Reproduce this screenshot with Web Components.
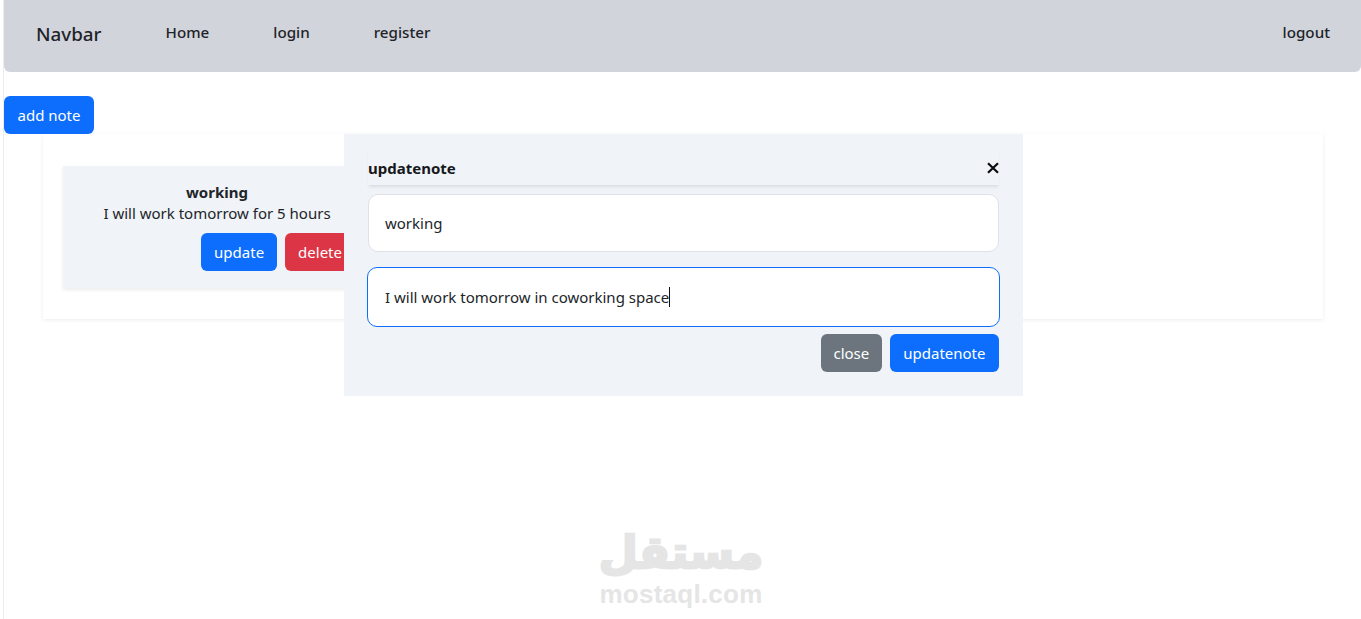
<!DOCTYPE html>
<html>
<head>
<meta charset="utf-8">
<title>notes</title>
<style>
  html, body { margin: 0; height: 100%; background: #fff; }
  body {
    font-family: "Noto Sans", "Open Sans", sans-serif;
    font-size: 15px;
    color: #212529;
    height: 619px;
    overflow: hidden;
    position: relative;
  }
  #page { margin-left: 3px; border-left: 1px solid #ececec; height: 619px; }
</style>
</head>
<body>
<div id="page">
  <nav-bar brand="Navbar">
    <nav-link>Home</nav-link>
    <nav-link>login</nav-link>
    <nav-link>register</nav-link>
    <nav-link slot="end">logout</nav-link>
  </nav-bar>
  <action-button variant="primary" style="margin-top:24px;padding:0 13.5px">add note</action-button>
  <notes-panel>
    <note-card title="working">I will work tomorrow for 5 hours</note-card>
  </notes-panel>
</div>
<update-modal heading="updatenote">
  <text-field>working</text-field>
  <text-field focused>I will work tomorrow in coworking space</text-field>
  <action-button variant="secondary" slot="actions" style="padding:0 12.5px">close</action-button>
  <action-button variant="primary" slot="actions" style="padding:0 13.5px">updatenote</action-button>
</update-modal>
<site-mark></site-mark>

<script>
class NavBar extends HTMLElement {
  constructor() {
    super()
    this.attachShadow({mode: 'open'})
    this.shadowRoot.innerHTML = `
      <style>
        :host {
          display: flex;
          align-items: center;
          height: 72px;
          box-sizing: border-box;
          padding: 0 31px 9px 32px;
          background: #d1d5db;
          border-radius: 0 0 6px 6px;
        }
        b { font-size: 18.8px; font-weight: 500; margin-right: 64px; position: relative; top: 2px; color: #1f2329; }
        .links { display: flex; gap: 64px; flex: 1; }
      </style>
      <b>${this.getAttribute('brand')}</b>
      <div class="links"><slot></slot></div>
      <slot name="end"></slot>
    `
  }
}

class NavLink extends HTMLElement {
  constructor() {
    super()
    this.attachShadow({mode: 'open'})
    this.shadowRoot.innerHTML = `
      <style>
        :host { display: block; font-size: 15.2px; font-weight: 500; color: #1f2329; }
      </style>
      <slot></slot>
    `
  }
}

class ActionButton extends HTMLElement {
  constructor() {
    super()
    this.attachShadow({mode: 'open'})
    this.shadowRoot.innerHTML = `
      <style>
        :host {
          display: inline-flex;
          align-items: center;
          justify-content: center;
          height: 38px;
          box-sizing: border-box;
          padding: 0 13px;
          border-radius: 6px;
          color: #fff;
          font-size: 15px;
          vertical-align: top;
          background: #0d6efd;
        }
        :host([variant=secondary]) { background: #6c757d; }
        :host([variant=danger]) { background: #dc3545; }
      </style>
      <slot></slot>
    `
  }
}

class NotesPanel extends HTMLElement {
  constructor() {
    super()
    this.attachShadow({mode: 'open'})
    this.shadowRoot.innerHTML = `
      <style>
        :host {
          display: block;
          box-sizing: border-box;
          margin-left: 39px;
          width: 1280px;
          height: 185px;
          padding: 32px 20px;
          background: #fff;
          box-shadow: 0 1px 4px rgba(0, 0, 0, .08);
        }
      </style>
      <slot></slot>
    `
  }
}

class NoteCard extends HTMLElement {
  constructor() {
    super()
    this.attachShadow({mode: 'open'})
    this.shadowRoot.innerHTML = `
      <style>
        :host {
          display: block;
          box-sizing: border-box;
          width: 308px;
          height: 122px;
          padding: 16px 16px 0;
          background: #f0f3f8;
          box-shadow: 0 2px 4px rgba(0, 0, 0, .08);
          text-align: center;
          line-height: 21px;
        }
        h5 { margin: 0; font-size: 15px; font-weight: 700; }
        p { margin: 0; }
        .row { display: flex; justify-content: flex-end; gap: 8px; margin-top: 9px; }
      </style>
      <h5>${this.getAttribute('title')}</h5>
      <p><slot></slot></p>
      <div class="row">
        <action-button variant="primary">update</action-button>
        <action-button variant="danger">delete</action-button>
      </div>
    `
  }
}

class TextField extends HTMLElement {
  constructor() {
    super()
    this.attachShadow({mode: 'open'})
    this.shadowRoot.innerHTML = `
      <style>
        :host {
          display: flex;
          align-items: center;
          box-sizing: border-box;
          height: 58px;
          padding: 0 16px;
          background: #fff;
          border: 1px solid #dee2e6;
          border-radius: 10px;
          font-size: 15px;
        }
        :host([focused]) { height: 60px; border-color: #0d6efd; margin: 0 -1px; padding: 0 17px; }
        i { display: none; width: 1px; height: 20px; background: #111; }
        :host([focused]) i { display: block; }
      </style>
      <slot></slot><i></i>
    `
  }
}

class UpdateModal extends HTMLElement {
  constructor() {
    super()
    this.attachShadow({mode: 'open'})
    this.shadowRoot.innerHTML = `
      <style>
        :host {
          position: absolute;
          left: 344px;
          top: 134px;
          width: 679px;
          height: 262px;
          box-sizing: border-box;
          padding: 16px 24px;
          background: #f0f3f8;
          display: flex;
          flex-direction: column;
        }
        header {
          display: flex;
          justify-content: space-between;
          align-items: center;
          height: 35px;
          box-shadow: 0 3px 3px -1px rgba(0, 0, 0, .09);
          font-weight: 700;
          color: #16181b;
        }
        svg { display: block; margin-top: 1px; }
        .fields { display: flex; flex-direction: column; gap: 15px; margin-top: 9px; }
        .actions { display: flex; justify-content: flex-end; gap: 8px; margin-top: 7px; }
      </style>
      <header>
        <span>${this.getAttribute('heading')}</span>
        <svg width="12" height="12" viewBox="0 0 12 12"><path d="M1 1.2 11 10.8M11 1.2 1 10.8" stroke="#0b0b0b" stroke-width="2.2"/></svg>
      </header>
      <div class="fields"><slot></slot></div>
      <div class="actions"><slot name="actions"></slot></div>
    `
  }
}

class SiteMark extends HTMLElement {
  constructor() {
    super()
    this.attachShadow({mode: 'open'})
    this.shadowRoot.innerHTML = `
      <style>
        :host {
          position: absolute;
          left: 581px;
          top: 527px;
          width: 200px;
          display: flex;
          flex-direction: column;
          align-items: center;
          color: #e5e5e5;
          font-family: "DejaVu Sans", sans-serif;
          font-weight: 700;
        }
        .ar { font-size: 45px; line-height: 52px; -webkit-text-stroke: 2.5px #e5e5e5; paint-order: stroke; }
        .en { font-family: "Liberation Sans", sans-serif; font-size: 26px; line-height: 30px; letter-spacing: .25px; }
      </style>
      <div class="ar" lang="ar" dir="rtl">مستقل</div>
      <div class="en">mostaql.com</div>
    `
  }
}

customElements.define('nav-bar', NavBar)
customElements.define('nav-link', NavLink)
customElements.define('action-button', ActionButton)
customElements.define('notes-panel', NotesPanel)
customElements.define('note-card', NoteCard)
customElements.define('text-field', TextField)
customElements.define('update-modal', UpdateModal)
customElements.define('site-mark', SiteMark)
</script>
</body>
</html>
